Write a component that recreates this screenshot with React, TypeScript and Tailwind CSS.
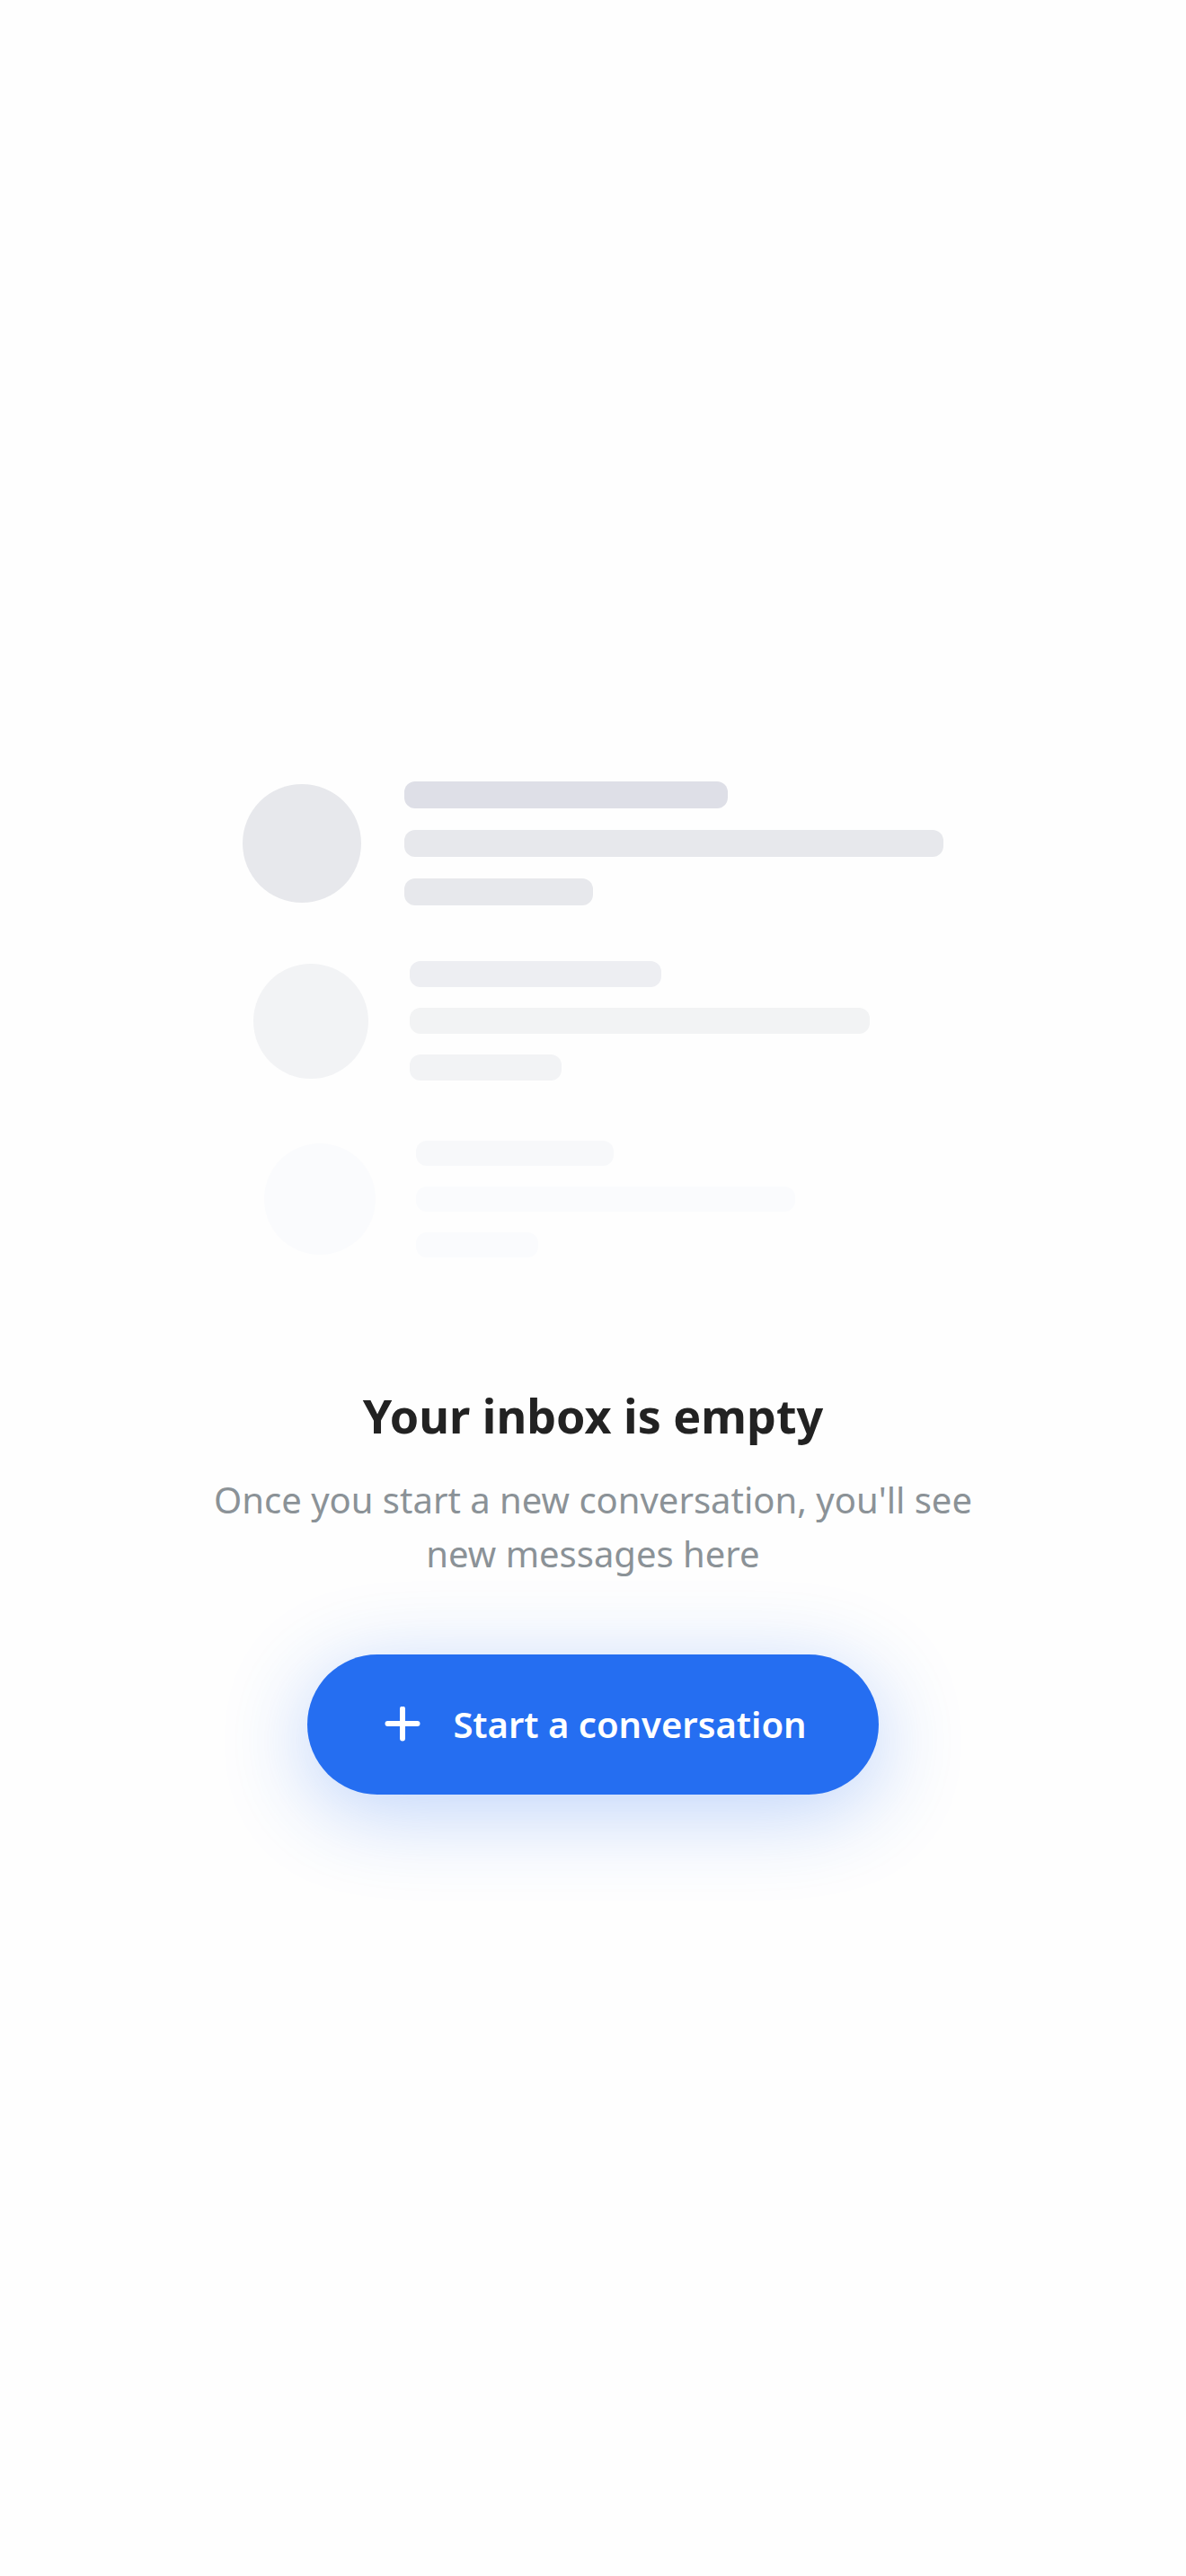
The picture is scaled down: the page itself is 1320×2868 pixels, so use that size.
import React from "react";
import clsx from "clsx";

type SkeletonRow = {
  row: string;
  avatar: string;
  lines: string;
  bars: string[];
};

// each row is a little smaller and paler than the one above it
const skeletonRows: SkeletonRow[] = [
  {
    row: "gap-12",
    avatar: "size-[132px] bg-[#e7e8ec]",
    lines: "gap-6",
    bars: [
      "h-[30px] w-[360px] bg-[#dedfe7]",
      "h-[30px] w-[600px] bg-[#e7e8ec]",
      "h-[30px] w-[210px] bg-[#e7e8ec]",
    ],
  },
  {
    row: "gap-[46px] pl-3",
    avatar: "size-[128px] bg-[#f2f3f5]",
    lines: "gap-[23px]",
    bars: [
      "h-[29px] w-[280px] bg-[#edeef2]",
      "h-[29px] w-[512px] bg-[#f2f3f4]",
      "h-[29px] w-[169px] bg-[#f2f3f5]",
    ],
  },
  {
    row: "gap-[45px] pl-6",
    avatar: "size-[124px] bg-[#fafbfd]",
    lines: "gap-[23px]",
    bars: [
      "h-7 w-[220px] bg-[#f7f8fa]",
      "h-7 w-[422px] bg-[#fafbfd]",
      "h-7 w-[136px] bg-[#fafbfd]",
    ],
  },
];

const InboxSkeleton: React.FC = () => (
  <div aria-hidden="true" className="grid auto-rows-[200px] items-start">
    {skeletonRows.map(({ row, avatar, lines, bars }, i) => (
      <div key={i} className={clsx("flex items-center", row)}>
        <div className={clsx("shrink-0 rounded-full", avatar)} />
        <div className={clsx("flex flex-col", lines)}>
          {bars.map((bar, j) => (
            <div key={j} className={clsx("rounded-xl", bar)} />
          ))}
        </div>
      </div>
    ))}
  </div>
);

const PlusIcon: React.FC = () => (
  <svg
    viewBox="0 0 40 40"
    className="size-10 shrink-0"
    fill="none"
    stroke="currentColor"
    strokeWidth="6"
    strokeLinecap="round"
    aria-hidden="true"
  >
    <path d="M20 2.5v33M3.5 19h33" />
  </svg>
);

const App: React.FC = () => {
  return (
    <main className="flex min-h-screen flex-col items-center justify-center bg-[#fefefe] px-6 text-center font-['Noto_Sans','Open_Sans',sans-serif]">
      <InboxSkeleton />

      <h1 className="mt-[70px] text-[52px] leading-[72px] font-bold text-[#222222]">
        Your inbox is empty
      </h1>
      <p className="mt-7 max-w-[900px] text-[40px] leading-[60px] text-[#8b9297]">
        Once you start a new conversation, you'll see new messages here
      </p>

      <button
        type="button"
        className="mt-[82px] flex h-[156px] items-center gap-9 rounded-full bg-[#256ef1] pr-20 pl-[86px] text-[40px] leading-[60px] font-semibold text-white shadow-[0_18px_96px_rgba(37,110,241,0.3)]"
      >
        <PlusIcon />
        Start a conversation
      </button>
    </main>
  );
};

export default App;
